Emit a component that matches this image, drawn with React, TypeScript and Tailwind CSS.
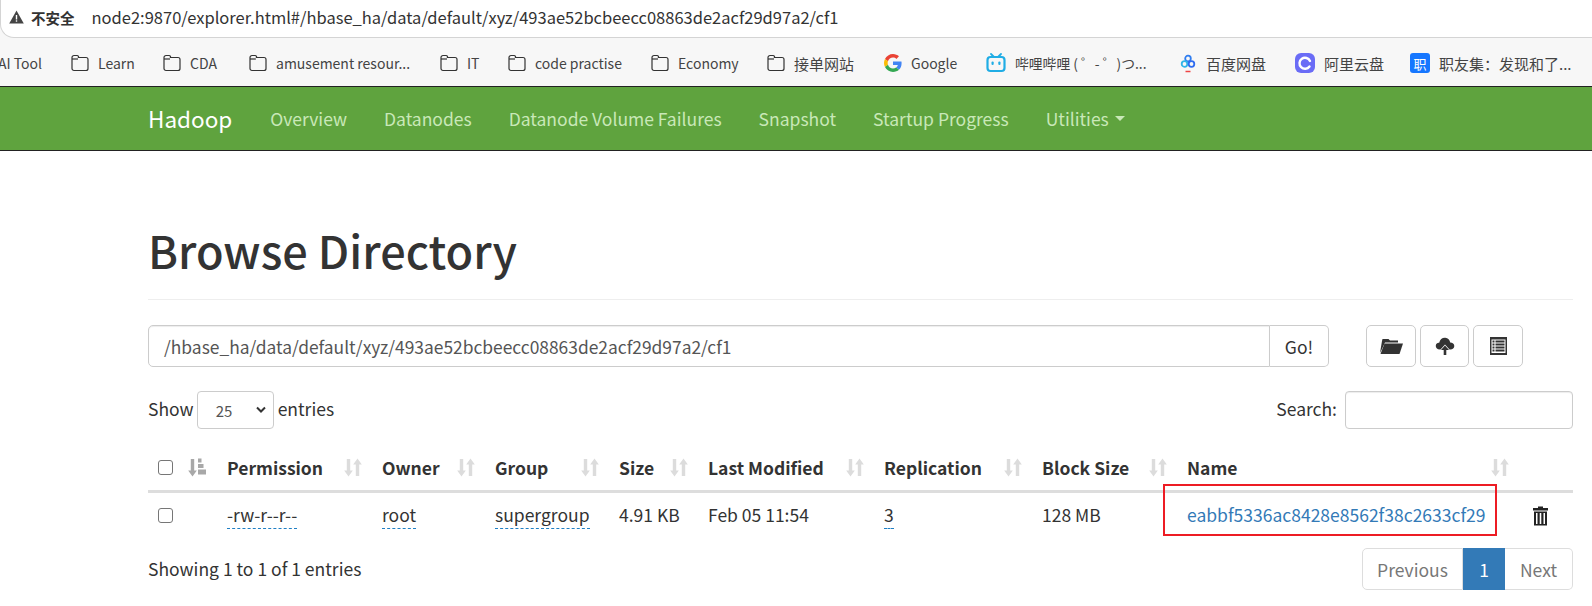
const font = "font-['Noto_Sans_CJK_SC',sans-serif]";

function Folder() {
  return (
    <svg width="18" height="18" viewBox="0 0 18 18" fill="none" stroke="#333" strokeWidth="1.2" className="shrink-0">
      <path d="M1 3.5 a2 2 0 0 1 2-2 h3 a1.5 1.5 0 0 1 1.5 2 h7.5 a2 2 0 0 1 2 2 v9 a2 2 0 0 1-2 2 h-12 a2 2 0 0 1-2-2 z" />
      <path d="M1 5 h6" />
    </svg>
  );
}

function GoogleIcon() {
  return (
    <svg width="18" height="18" viewBox="0 0 48 48" className="shrink-0">
      <path fill="#EA4335" d="M24 9.5c3.5 0 6.7 1.3 9.1 3.5l6.8-6.8C35.8 2.4 30.3 0 24 0 14.6 0 6.5 5.4 2.6 13.2l7.9 6.2C12.4 13.6 17.7 9.5 24 9.5z" />
      <path fill="#4285F4" d="M46.9 24.5c0-1.6-.1-3.1-.4-4.5H24v9h12.9c-.6 3-2.2 5.5-4.7 7.2l7.7 6c4.5-4.2 7-10.3 7-17.7z" />
      <path fill="#FBBC05" d="M10.5 28.6c-.5-1.4-.8-3-.8-4.6s.3-3.2.8-4.6l-7.9-6.2C.9 16.5 0 20.1 0 24s.9 7.5 2.6 10.8l7.9-6.2z" />
      <path fill="#34A853" d="M24 48c6.5 0 11.9-2.1 15.9-5.8l-7.7-6c-2.2 1.4-4.9 2.3-8.2 2.3-6.3 0-11.6-4.2-13.5-9.9l-7.9 6.2C6.5 42.6 14.6 48 24 48z" />
    </svg>
  );
}

function BiliIcon() {
  return (
    <svg width="20" height="20" viewBox="0 0 20 20" fill="none" className="shrink-0">
      <path d="M5 1 L8 4 M15 1 L12 4" stroke="#20ade5" strokeWidth="1.8" strokeLinecap="round" />
      <rect x="1.5" y="4" width="17" height="14" rx="3" stroke="#20ade5" strokeWidth="2.2" />
      <rect x="5.5" y="8.5" width="2.2" height="3.5" rx="1" fill="#20ade5" />
      <rect x="12.3" y="8.5" width="2.2" height="3.5" rx="1" fill="#20ade5" />
    </svg>
  );
}

function BaiduIcon() {
  return (
    <svg width="18" height="20" viewBox="0 0 18 20" fill="none" className="shrink-0">
      <circle cx="9" cy="5.5" r="2.8" stroke="#2f7df0" strokeWidth="1.8" />
      <circle cx="5.5" cy="11" r="2.8" stroke="#2fb5e8" strokeWidth="1.8" />
      <circle cx="12.5" cy="11" r="2.8" stroke="#2f6cf0" strokeWidth="1.8" />
      <path d="M6.5 18.5 h5" stroke="#ef4444" strokeWidth="1.5" />
    </svg>
  );
}

function AliIcon() {
  return (
    <svg width="20" height="20" viewBox="0 0 20 20" className="shrink-0">
      <rect x="0" y="0" width="20" height="20" rx="6" fill="#6a6cf6" />
      <path d="M14.5 13.5 A5.5 5.5 0 1 1 15 8" fill="none" stroke="#fff" strokeWidth="2.4" strokeLinecap="round" />
    </svg>
  );
}

function ZhiIcon() {
  return (
    <div className="flex h-5 w-5 shrink-0 items-center justify-center rounded-[3px] bg-[#1677ff] text-[13px] leading-none text-white">
      职
    </div>
  );
}

function Warn() {
  return (
    <svg width="15" height="14" viewBox="0 0 15 14" className="shrink-0">
      <path d="M7.5 0.5 L14.8 13.5 H0.2 Z" fill="#444" />
      <rect x="6.8" y="5" width="1.4" height="4.5" fill="#fff" />
      <rect x="6.8" y="10.3" width="1.4" height="1.4" fill="#fff" />
    </svg>
  );
}

function SortBoth() {
  return (
    <svg width="18" height="19" viewBox="0 0 18 19" fill="#dcdcdc" className="shrink-0">
      <path d="M2.8 1 h3.4 v11.5 h2.6 L4.5 18.5 0.2 12.5 H2.8 z" />
      <path d="M11.8 18 h3.4 V6.5 h2.6 L13.5 0.5 9.2 6.5 H11.8 z" />
    </svg>
  );
}

function SortAttr() {
  return (
    <svg width="18" height="19" viewBox="0 0 18 19" fill="#a8a8a8" className="shrink-0">
      <path d="M2.8 1 h3.4 v11.5 h2.6 L4.5 18.5 0.2 12.5 H2.8 z" />
      <rect x="10" y="0.5" width="3.5" height="4" />
      <rect x="10" y="6" width="5.5" height="4" />
      <rect x="10" y="11.5" width="8" height="5" />
    </svg>
  );
}

function FolderOpenGlyph() {
  return (
    <svg width="24" height="18" viewBox="0 0 24 18" fill="#333">
      <path d="M1 16 L3 4 L3.5 2 h6 l1.5 1.5 h8 v2 H6 L3 12 Z" />
      <path d="M5.5 6.5 H24 L20.5 17 H1.5 Z" />
    </svg>
  );
}

function CloudUpGlyph() {
  return (
    <svg width="20" height="20" viewBox="0 0 20 20" fill="#333">
      <path d="M5 13.5 C2 13.5 .5 11.5 .8 9.5 C1 7.5 2.8 6.5 4.2 6.8 C4.8 3.5 7.5 1.5 10.3 1.8 C13 2 14.8 4 15.2 6.5 C17.5 6.5 19.3 8 19.3 10 C19.3 12 17.5 13.5 15.5 13.5 L14.5 13.5 L10 8.5 L5.5 13.5 Z" />
      <path d="M10 9.5 L14 14 H11.3 V19 H8.7 V14 H6 Z" />
    </svg>
  );
}

function ListGlyph() {
  return (
    <svg width="17" height="18" viewBox="0 0 17 18">
      <rect x="0" y="0" width="17" height="18" fill="#333" />
      <rect x="1.5" y="2.5" width="14" height="13.5" fill="#fff" />
      <g fill="#333">
        <rect x="2.5" y="3.5" width="2" height="2" />
        <rect x="5.5" y="3.5" width="9" height="2" />
        <rect x="2.5" y="6.5" width="2" height="2" />
        <rect x="5.5" y="6.5" width="9" height="2" />
        <rect x="2.5" y="9.5" width="2" height="2" />
        <rect x="5.5" y="9.5" width="9" height="2" />
        <rect x="2.5" y="12.5" width="2" height="2" />
        <rect x="5.5" y="12.5" width="9" height="2" />
      </g>
    </svg>
  );
}

function TrashGlyph() {
  return (
    <svg width="17" height="20" viewBox="0 0 17 20" fill="#222">
      <path d="M6 0.5 h5 v1.5 h5 v2.5 H1 V2 h5 z" />
      <path d="M2 5.5 H15 V19.5 H2 Z M4 7 V18 H5.5 V7 Z M7.7 7 V18 H9.3 V7 Z M11.5 7 V18 H13 V7 Z" fillRule="evenodd" />
    </svg>
  );
}

function Check() {
  return <div className="h-[15px] w-[15px] rounded-[3px] border border-[#767676] bg-white" />;
}

const bookmarks: { icon: React.ReactNode; label: string; cls: string }[] = [
  { icon: <Folder />, label: "Learn", cls: "w-[37px]" },
  { icon: <Folder />, label: "CDA", cls: "w-[31px]" },
  { icon: <Folder />, label: "amusement resour...", cls: "w-[136px]" },
  { icon: <Folder />, label: "IT", cls: "w-[13px]" },
  { icon: <Folder />, label: "code practise", cls: "w-[88px]" },
  { icon: <Folder />, label: "Economy", cls: "w-[61px]" },
  { icon: <Folder />, label: "接单网站", cls: "w-[62px] text-[15px]" },
  { icon: <GoogleIcon />, label: "Google", cls: "w-[47px]" },
  { icon: <BiliIcon />, label: "哔哩哔哩 ( ゜- ゜)つ...", cls: "w-[136px] text-[13.8px]" },
  { icon: <BaiduIcon />, label: "百度网盘", cls: "w-[61px] text-[15px]" },
  { icon: <AliIcon />, label: "阿里云盘", cls: "w-[60px] mr-[-2px] text-[15px]" },
  { icon: <ZhiIcon />, label: "职友集:发现和了...", cls: "w-[134px] text-[15px]" },
];

const navs = ["Overview", "Datanodes", "Datanode Volume Failures", "Snapshot", "Startup Progress"];

function Th({ children }: { children: React.ReactNode }) {
  return (
    <th className="border-b-[3px] border-[#ddd] px-[10px] py-[10px] text-left font-bold">
      <div className="flex items-center justify-between">
        <span>{children}</span>
        <SortBoth />
      </div>
    </th>
  );
}

function Abbr({ children }: { children: React.ReactNode }) {
  return <span className="border-b border-dashed border-[#1f7fc4] pb-[1px]">{children}</span>;
}

export default function App() {
  const td = "px-[10px] pb-[15px] pt-[9px]";
  return (
    <div className={`h-[606px] w-[1592px] overflow-hidden bg-white text-[17.5px] leading-[25px] text-[#333] ${font}`}>
      <div className="bg-[#f7f7f7]">
        <div className="flex h-[38px] items-center gap-[7px] rounded-bl-[14px] border-b border-l border-[#d4d4d4] bg-white pb-[3px] pl-[8px]">
          <Warn />
          <span className="text-[14.5px] font-bold text-[#333]">不安全</span>
          <span className="ml-[10px] text-[16.5px] text-[#333]">node2:9870/explorer.html#/hbase_ha/data/default/xyz/493ae52bcbeecc08863de2acf29d97a2/cf1</span>
        </div>
      </div>
      <div className="flex h-[48px] items-center gap-[28px] overflow-hidden whitespace-nowrap bg-[#f7f7f7] pt-[2px] text-[14px] text-[#444]">
        <span className="ml-[-2px] w-[45px]">AI Tool</span>
        {bookmarks.map((b) => (
          <div key={b.label} className="flex items-center gap-[9px]">
            {b.icon}
            <span className={`overflow-hidden ${b.cls}`}>{b.label.replace(":", "\uFF1A")}</span>
          </div>
        ))}
      </div>
      <nav className="flex h-[65px] items-center border-y border-[#222] bg-[#5fa33e] pl-[148px]">
        <span className="mr-[38px] text-[22.5px] text-white">Hadoop</span>
        <div className="flex items-center gap-[37px] text-[17.5px] text-[#c9e8b8]">
          {navs.map((n) => (
            <span key={n}>{n}</span>
          ))}
          <span className="flex items-center gap-[6px]">
            Utilities
            <span className="h-0 w-0 border-x-[5px] border-t-[5px] border-x-transparent border-t-[#c9e8b8]" />
          </span>
        </div>
      </nav>

      <main className="ml-[148px] w-[1425px]">
        <h1 className="mt-[69px] border-b border-[#eee] pb-[19px] text-[45px] font-medium leading-[60px] text-[#333]">
          Browse Directory
        </h1>

        <div className="mt-[25px] flex items-start">
          <div className="flex h-[42px] w-[1181px]">
            <div className="flex flex-1 items-center rounded-l-[5px] border border-[#ccc] pl-[15px] text-[17.4px] text-[#555] shadow-[inset_0_1px_1px_rgba(0,0,0,0.075)]">
              /hbase_ha/data/default/xyz/493ae52bcbeecc08863de2acf29d97a2/cf1
            </div>
            <div className="flex w-[59px] items-center justify-center rounded-r-[5px] border border-l-0 border-[#ccc]">Go!</div>
          </div>
          <div className="ml-[37px] flex gap-[4px]">
            <div className="flex h-[42px] w-[50px] items-center justify-center rounded-[5px] border border-[#ccc]"><FolderOpenGlyph /></div>
            <div className="flex h-[42px] w-[49px] items-center justify-center rounded-[5px] border border-[#ccc]"><CloudUpGlyph /></div>
            <div className="flex h-[42px] w-[50px] items-center justify-center rounded-[5px] border border-[#ccc]"><ListGlyph /></div>
          </div>
        </div>

        <div className="mt-[24px] flex items-center justify-between">
          <div className="flex items-center gap-[3px]">
            <span className="pb-[4px]">Show</span>
            <div className="flex h-[38px] w-[77px] items-center justify-between rounded-[4px] border border-[#ccc] pl-[18px] pr-[6px] text-[15px] text-[#555]">
              25
              <svg width="12" height="8" viewBox="0 0 12 8" fill="none" stroke="#333" strokeWidth="2"><path d="M2 1.5 L6 5.5 L10 1.5" /></svg>
            </div>
            <span className="ml-[1px] pb-[4px]">entries</span>
          </div>
          <div className="flex items-center gap-[8px]">
            <span className="pb-[4px]">Search:</span>
            <div className="h-[38px] w-[228px] rounded-[4px] border border-[#ccc] shadow-[inset_0_1px_1px_rgba(0,0,0,0.075)]" />
          </div>
        </div>

        <table className="mt-[16px] w-full table-fixed border-collapse">
          <colgroup>
            <col className="w-[69px]" />
            <col className="w-[155px]" />
            <col className="w-[113px]" />
            <col className="w-[124px]" />
            <col className="w-[89px]" />
            <col className="w-[176px]" />
            <col className="w-[158px]" />
            <col className="w-[145px]" />
            <col className="w-[342px]" />
            <col />
          </colgroup>
          <thead>
            <tr>
              <th className="border-b-[3px] border-[#ddd] py-[10px] pl-[10px] text-left align-middle">
                <div className="flex items-center gap-[15px]">
                  <Check />
                  <SortAttr />
                </div>
              </th>
              <Th>Permission</Th>
              <Th>Owner</Th>
              <Th>Group</Th>
              <Th>Size</Th>
              <Th>Last Modified</Th>
              <Th>Replication</Th>
              <Th>Block Size</Th>
              <Th>Name</Th>
              <th className="border-b-[3px] border-[#ddd]" />
            </tr>
          </thead>
          <tbody>
            <tr>
              <td className="pb-[14px] pl-[10px] pt-[10px] align-middle"><Check /></td>
              <td className={td}><Abbr>-rw-r--r--</Abbr></td>
              <td className={td}><Abbr>root</Abbr></td>
              <td className={td}><Abbr>supergroup</Abbr></td>
              <td className={td}>4.91 KB</td>
              <td className={td}>Feb 05 11:54</td>
              <td className={td}><Abbr>3</Abbr></td>
              <td className={td}>128 MB</td>
              <td className={`relative text-[#337ab7] ${td}`}>
                eabbf5336ac8428e8562f38c2633cf29
                <div className="absolute left-[-14px] right-[22px] top-[-9px] h-[52px] border-2 border-[#ed1c24]" />
              </td>
              <td className="pb-[14px] pl-[13px] pt-[10px] align-middle"><TrashGlyph /></td>
            </tr>
          </tbody>
        </table>

        <div className="mt-[6px] flex items-center justify-between">
          <span className="pb-[2px]">Showing 1 to 1 of 1 entries</span>
          <div className="flex h-[42px] items-stretch">
            <div className="flex w-[101px] items-center justify-center rounded-l-[5px] border border-[#ddd] text-[#777]">Previous</div>
            <div className="flex w-[42px] items-center justify-center bg-[#337ab7] text-white">1</div>
            <div className="flex w-[68px] items-center justify-center rounded-r-[5px] border border-l-0 border-[#ddd] text-[#777]">Next</div>
          </div>
        </div>
      </main>
    </div>
  );
}
